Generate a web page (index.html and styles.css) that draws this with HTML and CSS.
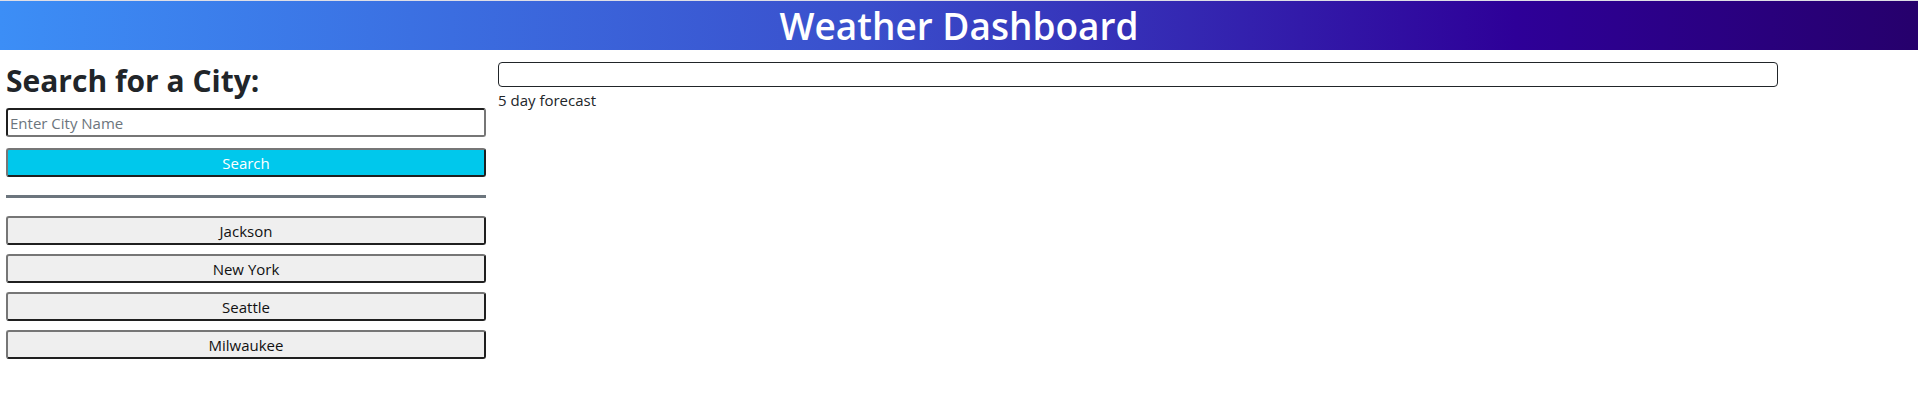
FILE: index.html
```html
<!DOCTYPE html>
<html lang="en">
<head>
<meta charset="utf-8">
<title>Weather Dashboard</title>
<link rel="stylesheet" href="styles.css">
</head>
<body>
<header class="site-header">
  <h1 class="site-title">Weather Dashboard</h1>
</header>
<main class="layout">
  <aside class="sidebar">
    <h2 class="search-title">Search for a City:</h2>
    <input class="city-input" type="text" placeholder="Enter City Name">
    <button class="search-btn" type="button">Search</button>
    <hr class="divider">
    <div class="history">
      <button class="history-btn" type="button">Jackson</button>
      <button class="history-btn" type="button">New York</button>
      <button class="history-btn" type="button">Seattle</button>
      <button class="history-btn" type="button">Milwaukee</button>
    </div>
  </aside>
  <section class="content">
    <div class="current-box"></div>
    <p class="forecast-label">5 day forecast</p>
  </section>
</main>
</body>
</html>
```
FILE: styles.css
```css
* {
  box-sizing: border-box;
}

body {
  margin: 0;
  font-family: "Open Sans", "Noto Sans", sans-serif;
  color: #212529;
  background: #ffffff;
}

.site-header {
  border-top: 1px solid #dedee6;
  height: 50px;
  background: linear-gradient(90deg, #3c8ef6 0%, #3a4fcc 45%, #2e0098 79%, #26006c 100%);
  display: flex;
  justify-content: center;
  align-items: center;
}

.site-title {
  margin: 0;
  color: #ffffff;
  font-size: 37px;
  font-weight: 600;
  line-height: 49px;
}

.layout {
  display: flex;
  align-items: flex-start;
  padding: 12px 0 0 6px;
}

.sidebar {
  width: 480px;
  display: flex;
  flex-direction: column;
}

.search-title {
  margin: 0 0 8px;
  font-size: 30px;
  font-weight: 700;
  line-height: 38px;
}

.city-input {
  height: 29px;
  width: 100%;
  margin: 0 0 11px;
  padding: 0 2px;
  font-family: inherit;
  font-size: 15px;
  color: #212529;
  border: 2px solid;
  border-color: #1f1f1f #767676 #767676 #1f1f1f;
  border-radius: 3px;
  background: #ffffff;
}

.city-input::placeholder {
  color: #6c757d;
}

.search-btn,
.history-btn {
  height: 29px;
  width: 100%;
  padding: 0 6px;
  font-family: inherit;
  font-size: 15px;
  border: 2px solid;
  border-color: #767676 #1f1f1f #1f1f1f #767676;
  border-radius: 3px;
  cursor: pointer;
}

.search-btn {
  background: #00c8ec;
  color: #ffffff;
}

.divider {
  margin: 18px 0;
  height: 3px;
  border: 0;
  background: #6c757d;
  opacity: 1;
}

.history {
  display: flex;
  flex-direction: column;
  gap: 9px;
}

.history-btn {
  background: #efefef;
  color: #111111;
}

.content {
  width: 1280px;
  margin-left: 12px;
}

.current-box {
  height: 25px;
  border: 1px solid #212529;
  border-radius: 4px;
}

.forecast-label {
  margin: 0;
  font-size: 15px;
  line-height: 26px;
}
```
